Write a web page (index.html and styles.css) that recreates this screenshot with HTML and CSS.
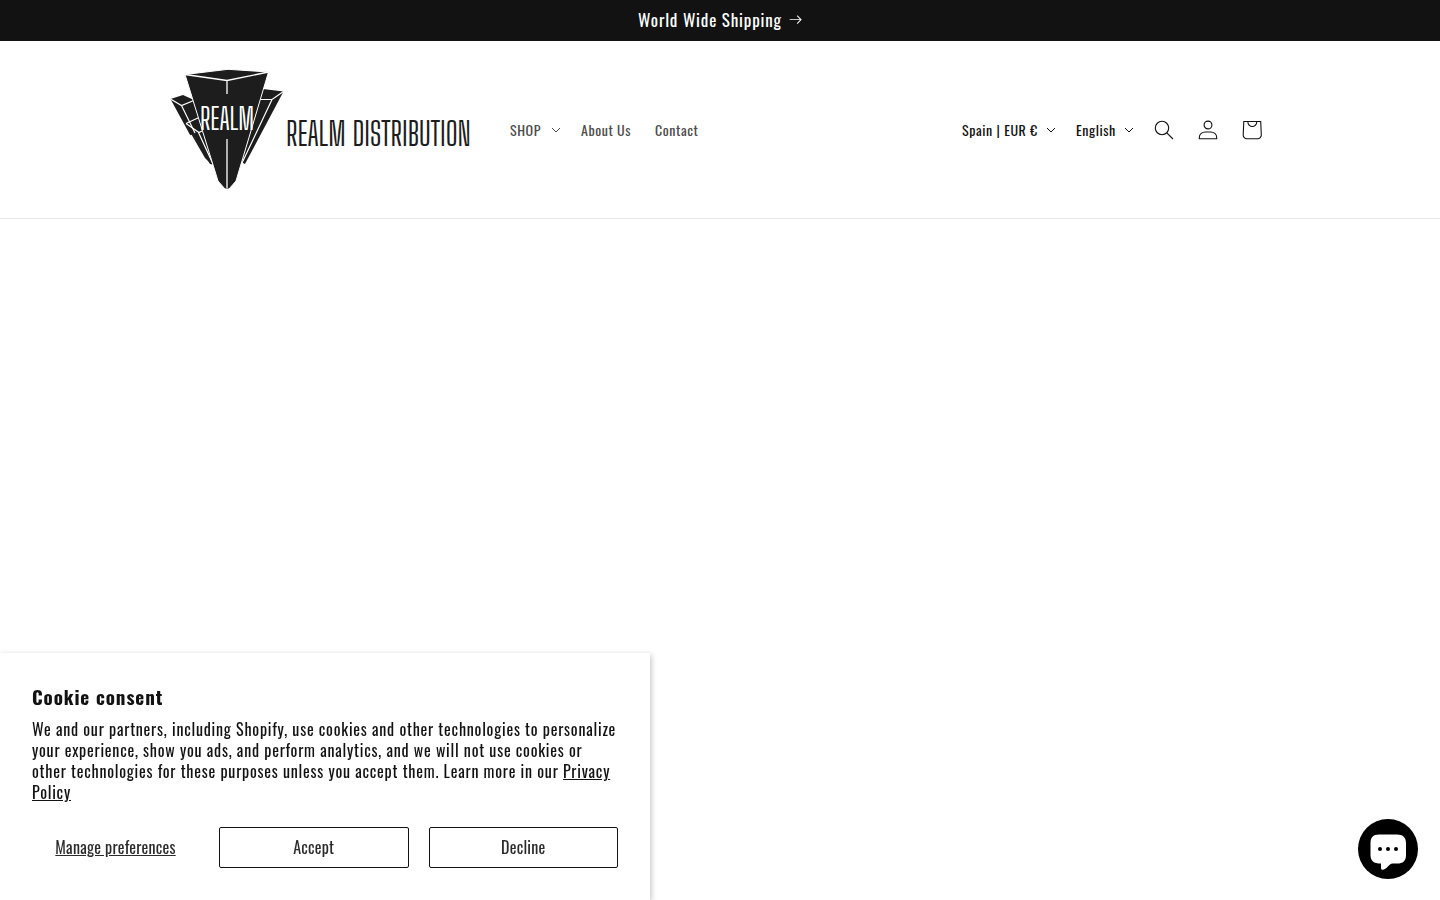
FILE: index.html
```html
<!DOCTYPE html>
<html lang="en">
<head>
  <meta charset="UTF-8">
  <meta name="viewport" content="width=device-width, initial-scale=1">
  <title>Realm Distribution</title>
  <link rel="stylesheet" href="styles.css">
</head>
<body>
  <div class="announcement-bar">
    <a href="#" class="announcement-link">
      World Wide Shipping
      <svg class="icon-arrow" viewBox="0 0 14 10" fill="currentColor" aria-hidden="true">
        <path fill-rule="evenodd" clip-rule="evenodd" d="M8.537.808a.5.5 0 01.817-.162l4 4a.5.5 0 010 .708l-4 4a.5.5 0 11-.708-.708L11.793 5.500H1a.5.5 0 010-1h10.793L8.646 1.354a.5.5 0 01-.109-.546z"/>
      </svg>
    </a>
  </div>

  <header class="header">
    <div class="header-inner">
      <a href="#" class="logo">
        <svg class="logo-mark" viewBox="0 0 114 121" aria-hidden="true">
          <!-- side crystals -->
          <g fill="#1d1d1d">
            <path d="M.5 30 13 26 24 31 34 64 20 66 25.500 76Z"/>
            <path d="M17 55.500 32 48 50 100 44 95.500 40 95Z"/>
            <path d="M5 37 17 55.500 42 96 35 89Z"/>
            <path d="M93 20 113.500 22.500 75 95 70 92.500 82 50Z"/>
          </g>
          <g fill="none" stroke="#fff" stroke-width="1.2">
            <path d="M.5 30 11.500 36.500 25 31M11.500 36.500 25 64"/>
            <path d="M16 54.500 30 48M16 54.500 29 63.500 32 62M28.500 63.500 43 95"/>
            <path d="M88 30.500H102L113.500 22.500M102 30.500 72 94"/>
          </g>
          <!-- main crystal -->
          <path d="M15 5.500 58 .3 98.500 3 66 112 59 120H55L48 112Z" fill="#1d1d1d" stroke="#fff"/>
          <path d="M15 5.500 57 11.500 98.500 3M57 11.500V25M57 70V119" fill="none" stroke="#fff" stroke-width="1.3"/>
          <text class="mark-text" x="57" y="61" text-anchor="middle">REALM</text>
        </svg>
        <span class="logo-text">REALM DISTRIBUTION</span>
      </a>

      <nav class="nav">
        <details class="nav-menu">
          <summary class="nav-link">SHOP
            <svg class="icon-caret" viewBox="0 0 10 6" fill="none" stroke="currentColor" aria-hidden="true"><path d="M1 1 5 5 9 1"/></svg>
          </summary>
        </details>
        <a href="#" class="nav-link">About Us</a>
        <a href="#" class="nav-link">Contact</a>
      </nav>

      <div class="header-tools">
        <div class="picker">
          <select class="picker-select" aria-label="Country/region"><option>Spain | EUR €</option></select>
          <svg class="icon-caret" viewBox="0 0 10 6" fill="none" stroke="currentColor" aria-hidden="true"><path d="M1 1 5 5 9 1"/></svg>
        </div>
        <div class="picker">
          <select class="picker-select" aria-label="Language"><option>English</option></select>
          <svg class="icon-caret" viewBox="0 0 10 6" fill="none" stroke="currentColor" aria-hidden="true"><path d="M1 1 5 5 9 1"/></svg>
        </div>
        <div class="header-icons">
          <button type="button" class="icon-button" aria-label="Search">
            <svg viewBox="0 0 20 20" fill="none" stroke="currentColor" stroke-width="1.1" aria-hidden="true"><circle cx="8" cy="8" r="6.700"/><path d="M12.800 12.800 19 19"/></svg>
          </button>
          <a href="#" class="icon-button" aria-label="Log in">
            <svg viewBox="0 0 20 20" fill="none" stroke="currentColor" stroke-width="1.1" aria-hidden="true"><circle cx="10" cy="5" r="3.900"/><path d="M1.300 18.800v-1.300c0-3.500 3-5.500 6-5.500h5.400c3 0 6 2 6 5.500v1.300Z"/></svg>
          </a>
          <a href="#" class="icon-button" aria-label="Cart">
            <svg viewBox="0 0 20 20" fill="none" stroke="currentColor" stroke-width="1.1" aria-hidden="true"><path d="M1.800 1.500h16.900l.6 13.300a3.800 3.800 0 0 1-3.800 4H5a3.800 3.800 0 0 1-3.800-4ZM5.800 1.500a4.500 5 0 0 0 9 0"/></svg>
          </a>
        </div>
      </div>
    </div>
  </header>

  <main class="content"></main>

  <section class="cookie-banner" aria-labelledby="cookie-title">
    <h2 id="cookie-title" class="cookie-title">Cookie consent</h2>
    <p class="cookie-text">We and our partners, including Shopify, use cookies and other technologies to personalize your experience, show you ads, and perform analytics, and we will not use cookies or other technologies for these purposes unless you accept them. Learn more in our <a href="#">Privacy Policy</a></p>
    <div class="cookie-actions">
      <button type="button" class="cookie-manage">Manage preferences</button>
      <button type="button" class="cookie-button">Accept</button>
      <button type="button" class="cookie-button">Decline</button>
    </div>
  </section>

  <button type="button" class="chat-button" aria-label="Chat">
    <svg viewBox="0 0 60 60" aria-hidden="true">
      <path fill="#fff" d="M21 15.500h18c6 0 9 3 9 9V36c0 6-3 8.500-9 8.500h-4.500c-3 0-5.500 5.500-9.500 6.200-1.500.2-2-.7-2-2v-4.200c-7.500 0-10.500-2.500-10.500-8.500V24.500c0-6 2.500-9 8.500-9Z"/>
      <circle cx="22" cy="30" r="2"/><circle cx="30" cy="30" r="2"/><circle cx="38" cy="30" r="2"/>
    </svg>
  </button>
</body>
</html>
```

FILE: styles.css
```css
* { box-sizing: border-box; }

body {
  margin: 0;
  min-height: 100vh;
  background: #fff;
  color: #121212;
  font-family: Oswald, "Liberation Sans Narrow", "Liberation Sans", sans-serif;
  font-size: 16px;
}

button, select { font-family: inherit; color: inherit; }

.announcement-bar {
  display: flex;
  justify-content: center;
  background: #121212;
}

.announcement-link {
  display: flex;
  align-items: center;
  gap: 7px;
  padding: 8px 0 10px;
  color: #fff;
  font-size: 17px;
  line-height: 23px;
  letter-spacing: 0.048em;
  text-decoration: none;
}

.icon-arrow { width: 13px; }

.header { border-bottom: 1px solid #e7e7e7; }

.header-inner {
  display: flex;
  align-items: center;
  gap: 28px;
  max-width: 1200px;
  margin: 0 auto;
  padding: 28px 46px 28px 50px;
}

.logo {
  display: flex;
  align-items: center;
  gap: 2px;
  width: 300px;
  color: #1d1d1d;
  font-family: "Big Shoulders Display", "League Gothic", Oswald, "Liberation Sans Narrow", sans-serif;
  text-decoration: none;
  white-space: nowrap;
}

.logo-mark { width: 114px; height: 121px; flex: none; }
.mark-text { font-size: 30px; fill: #fff; }
.logo-text { padding-top: 8px; font-size: 33px; line-height: 40px; }

.nav { display: flex; align-items: center; }

.nav-link {
  display: flex;
  align-items: center;
  gap: 10px;
  padding: 12px;
  color: #4d4d4d;
  font-size: 14px;
  line-height: 20px;
  letter-spacing: 0.04em;
  text-decoration: none;
  list-style: none;
  cursor: pointer;
}

.nav-menu .nav-link { padding-right: 8px; }
.nav-link:hover { text-decoration: underline; }

.icon-caret { width: 10px; height: 6px; flex: none; }

.header-tools {
  display: flex;
  align-items: center;
  gap: 20px;
  margin-left: auto;
}

.picker { display: flex; align-items: center; gap: 8px; }

.picker-select {
  appearance: none;
  padding: 0;
  border: 0;
  background: none;
  font-size: 14px;
  line-height: 20px;
  letter-spacing: 0.04em;
}

.header-icons { display: flex; margin-left: -12px; }

.icon-button {
  display: flex;
  align-items: center;
  justify-content: center;
  width: 44px;
  height: 44px;
  padding: 0;
  border: 0;
  background: none;
  color: #121212;
  cursor: pointer;
}

.icon-button svg { width: 20px; height: 20px; }

.cookie-banner {
  position: fixed;
  left: 0;
  bottom: 0;
  width: 650px;
  max-width: 100%;
  padding: 32px;
  background: #fff;
  box-shadow: 1px 2px 6px rgba(0, 0, 0, 0.25);
}

.cookie-title {
  margin: 0 0 12px;
  font-size: 19px;
  line-height: 22px;
  letter-spacing: 0.048em;
}

.cookie-text {
  margin: 0 0 24px;
  font-size: 16px;
  line-height: 21px;
  letter-spacing: 0.048em;
}

.cookie-text a { color: inherit; }

.cookie-actions {
  display: grid;
  grid-template-columns: 167px 1fr 1fr;
  gap: 20px;
}

.cookie-actions button {
  height: 41px;
  padding: 0 0 2px;
  border: 1px solid #121212;
  border-radius: 2px;
  background: none;
  color: #2b2b2b;
  font-size: 16px;
  letter-spacing: 0.015em;
  cursor: pointer;
}

.cookie-actions .cookie-manage {
  border-color: transparent;
  text-decoration: underline;
}

.chat-button {
  position: fixed;
  right: 22px;
  bottom: 21px;
  width: 60px;
  height: 60px;
  padding: 0;
  border: 0;
  border-radius: 50%;
  background: #000;
  cursor: pointer;
}

.chat-button svg { display: block; }
```
